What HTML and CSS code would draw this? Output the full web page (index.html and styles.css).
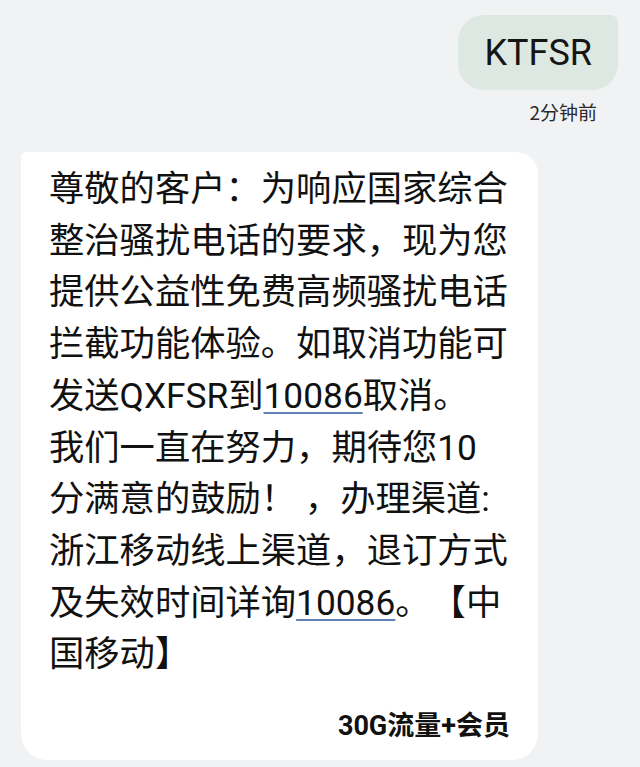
FILE: index.html
```html
<!DOCTYPE html>
<html lang="zh-CN">
<head>
<meta charset="utf-8">
<link rel="stylesheet" href="styles.css">
</head>
<body>
<div class="thread">
  <div class="sent-row">
    <div class="sent-bubble">KTFSR</div>
  </div>
  <div class="time-row">2分钟前</div>
  <div class="recv-bubble">
    <p class="msg">尊敬的客户：为响应国家综合<br>整治骚扰电话的要求，现为您<br>提供公益性免费高频骚扰电话<br>拦截功能体验。如取消功能可<br>发送QXFSR到<span class="num">10086</span>取消。<br>我们一直在努力，期待您10<br>分满意的鼓励！ ，办理渠道:<br>浙江移动线上渠道，退订方式<br>及失效时间详询<span class="num">10086</span>。【中<br>国移动】</p>
    <div class="sig">30G流量+会员</div>
  </div>
</div>
</body>
</html>
```
FILE: styles.css
```css
html, body {
  margin: 0;
  padding: 0;
}
body {
  background: #f1f2f4;
  width: 640px;
  height: 767px;
  overflow: hidden;
  font-family: "Noto Sans CJK SC", "Noto Sans", sans-serif;
  color: #111;
}
.thread {
  display: flex;
  flex-direction: column;
  padding-top: 15px;
}
.sent-row {
  display: flex;
  justify-content: flex-end;
  padding-right: 22px;
}
.sent-bubble {
  background: #dde8e2;
  border-radius: 26px 8px 26px 26px;
  height: 75px;
  padding: 0 26px;
  display: flex;
  align-items: center;
  font-family: Roboto, "Noto Sans", sans-serif;
  font-size: 36px;
  color: #151515;
}
.time-row {
  text-align: right;
  padding-right: 43px;
  margin-top: 9px;
  font-size: 19px;
  line-height: 26px;
  color: #2a2a2a;
}
.recv-bubble {
  margin-top: 27px;
  margin-left: 21px;
  width: 517px;
  box-sizing: border-box;
  background: #ffffff;
  border-radius: 5px 22px 26px 26px;
  padding: 12px 28px 18px 28px;
}
.msg {
  margin: 0;
  font-family: Roboto, "Noto Sans CJK SC", sans-serif;
  font-size: 35.3px;
  line-height: 51.7px;
  white-space: nowrap;
  text-spacing-trim: space-all;
}
.num {
  text-decoration: underline;
  text-decoration-color: #5f83b8;
  text-decoration-thickness: 1.5px;
  text-underline-offset: 4px;
}
.sig {
  margin-top: 29px;
  text-align: right;
  font-family: Roboto, "Noto Sans CJK SC", sans-serif;
  font-size: 27px;
  line-height: 32px;
  font-weight: 700;
}
```
